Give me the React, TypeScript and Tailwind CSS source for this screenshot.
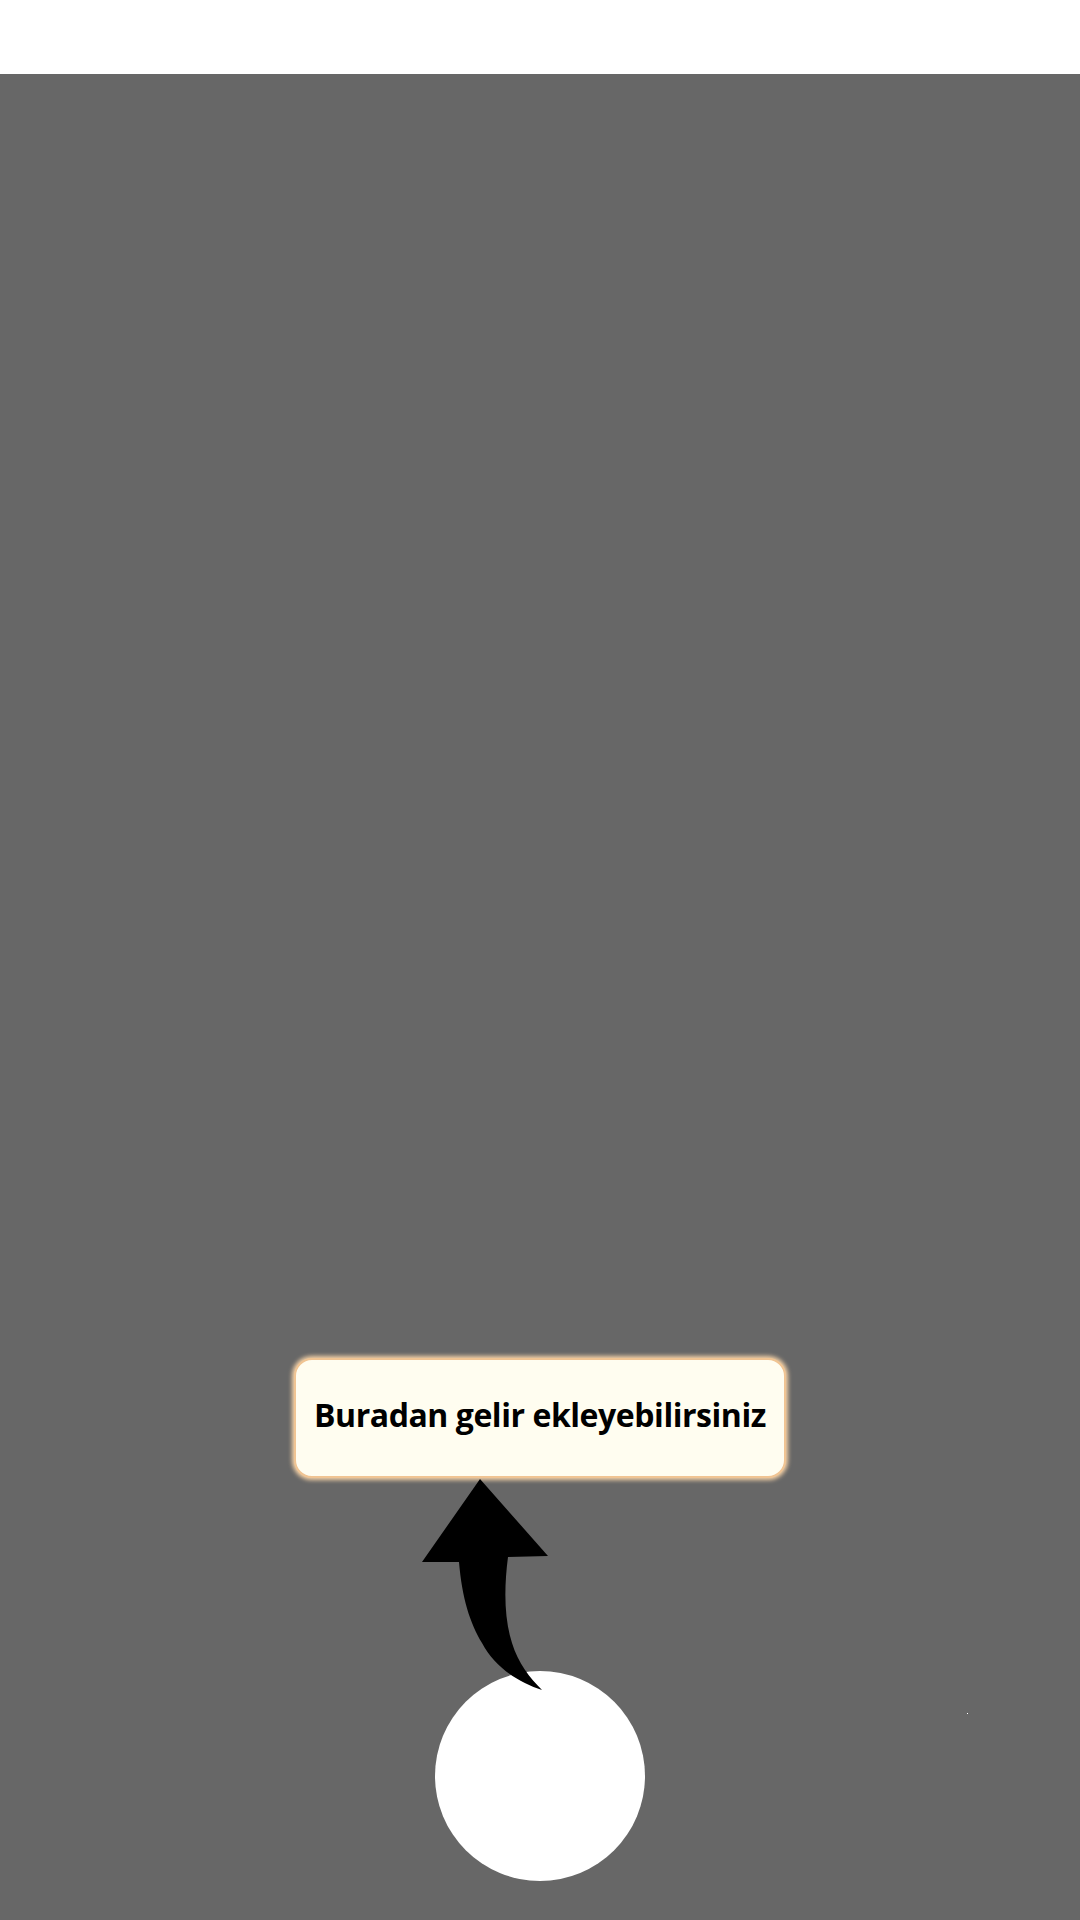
import React from "react";

const Arrow: React.FC = () => (
  <svg width="130" height="214" viewBox="0 0 130 214" className="block">
    <path
      d="M60 1 L128 78 L88 79 C84 110 84 140 92 165 C98 185 110 200 122 212 C100 205 75 190 62 165 C50 145 42 120 39 84 L2 84 Z"
      fill="#000"
    />
  </svg>
);

const App: React.FC = () => {
  return (
    <div className="w-[1080px] h-[1920px] flex flex-col bg-white overflow-hidden">
      <div className="h-[74px] bg-white shrink-0" />
      <div className="relative flex-1 bg-[#676767] flex flex-col items-center justify-end pb-[39px]">
        <div className="w-[492px] h-[120px] rounded-[18px] bg-[#fffdf0] border-2 border-[#f0c493] shadow-[0_0_4px_2px_#f6d3a8] flex items-center justify-center pb-[6px]">
          <span
            className="text-[32px] font-bold text-black tracking-[-0.45px]"
            style={{ fontFamily: '"Open Sans", "Noto Sans", sans-serif' }}
          >
            Buradan gelir ekleyebilirsiniz
          </span>
        </div>
        <div className="w-full pl-[420px] -mb-[21px] relative z-10">
          <Arrow />
        </div>
        <div className="w-[210px] h-[210px] rounded-full bg-white" />
        <div className="absolute left-[967px] top-[1639px] w-px h-px bg-white" />
      </div>
    </div>
  );
};

export default App;
